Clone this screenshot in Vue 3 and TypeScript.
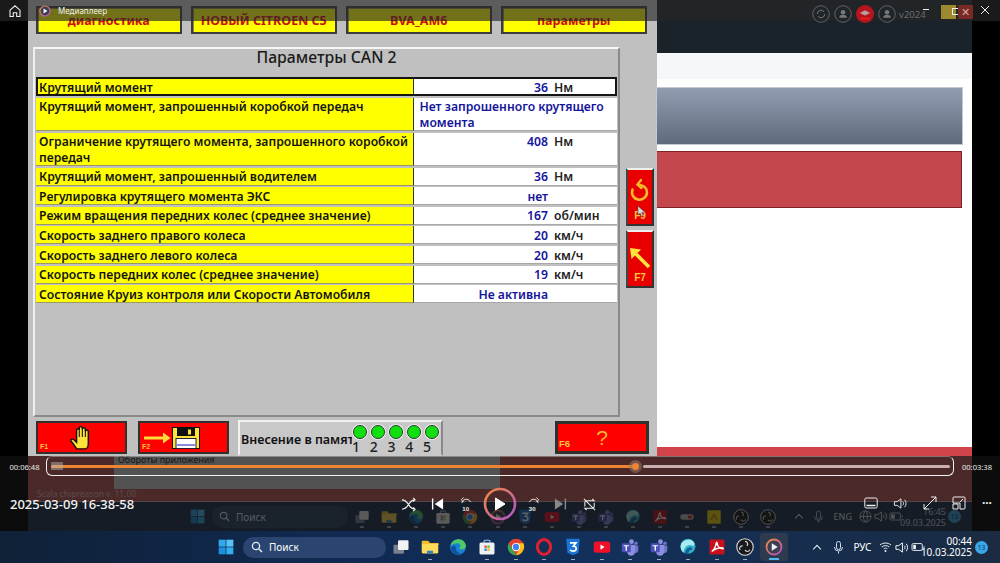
<script setup lang="ts">
interface Row { label: string; value: string; unit?: string; tall?: boolean; text?: boolean; active?: boolean }

const tabs: string[] = ['диагностика', 'НОВЫЙ CITROEN C5', 'BVA_AM6', 'параметры']

const rows: Row[] = [
  { label: 'Крутящий момент', value: '36', unit: 'Нм', active: true },
  { label: 'Крутящий момент, запрошенный коробкой передач', value: 'Нет запрошенного крутящего момента', tall: true, text: true },
  { label: 'Ограничение крутящего момента, запрошенного коробкой передач', value: '408', unit: 'Нм', tall: true },
  { label: 'Крутящий момент, запрошенный водителем', value: '36', unit: 'Нм' },
  { label: 'Регулировка крутящего момента ЭКС', value: 'нет' },
  { label: 'Режим вращения передних колес (среднее значение)', value: '167', unit: 'об/мин' },
  { label: 'Скорость заднего правого колеса', value: '20', unit: 'км/ч' },
  { label: 'Скорость заднего левого колеса', value: '20', unit: 'км/ч' },
  { label: 'Скорость передних колес (среднее значение)', value: '19', unit: 'км/ч' },
  { label: 'Состояние Круиз контроля или Скорости Автомобиля', value: 'Не активна' },
]

const leds: number[] = [1, 2, 3, 4, 5]

const statusIcons: string[] = ['s-refresh', 's-user', 's-cap', 's-user']

const innerApps: string[] = ['i-view', 'i-folder', 'i-edge', 'i-store', 'i-chrome', 'i-player', 'i-css', 'i-yt', 'i-teams', 'i-teams', 'i-globe', 'i-pdf', 'i-toggle', 'i-gold', 'i-obs', 'i-obs']
const outerApps: string[] = ['i-view', 'i-folder', 'i-edge', 'i-store', 'i-chrome', 'i-opera', 'i-css', 'i-yt', 'i-teams', 'i-teams', 'i-globe', 'i-pdf', 'i-obs', 'i-player']
</script>

<template>
  <div class="stage">
    <svg class="sprite" width="0" height="0" aria-hidden="true">
      <defs>
        <linearGradient id="ringGrad" x1="0" y1="0" x2="1" y2="1">
          <stop offset="0" stop-color="#f08a3c" />
          <stop offset="1" stop-color="#b054c8" />
        </linearGradient>
        <symbol id="i-win" viewBox="0 0 24 24">
          <path fill="#2fa8ee" d="M1 1h10.500v10.500H1z" /><path fill="#53c3f8" d="M12.500 1H23v10.500H12.500z" />
          <path fill="#1d8fdc" d="M1 12.500h10.500V23H1z" /><path fill="#33aef0" d="M12.500 12.500H23V23H12.500z" />
        </symbol>
        <symbol id="i-view" viewBox="0 0 24 24">
          <rect x="2" y="9" width="14" height="12" rx="1.500" fill="#77808c" />
          <rect x="8" y="3" width="14" height="13" rx="1.500" fill="#f2f2f2" />
        </symbol>
        <symbol id="i-folder" viewBox="0 0 24 24">
          <path fill="#f2bd2c" d="M1 5a1.500 1.500 0 0 1 1.500-1.500h7l2.500 3h10.500a1 1 0 0 1 1 1V9H1z" />
          <path fill="#ffd95a" d="M1 8h22v11a1.500 1.500 0 0 1-1.500 1.500h-19A1.500 1.500 0 0 1 1 19z" />
          <rect x="8" y="17" width="8" height="3.500" fill="#2a7fd0" />
        </symbol>
        <symbol id="i-edge" viewBox="0 0 24 24">
          <circle cx="12" cy="12" r="10.500" fill="#1b80cf" />
          <path fill="#4ec96a" d="M2 11C3 4 9 1.500 13 1.500c5.500 0 9.500 4.500 9.500 9 0 3-2.500 4.500-5.500 4.500-2 0-3-.8-3.500-1.500 3-1.500 2-6.500-2.500-6.500C7 7 3.500 8.500 2 11z" />
          <path fill="#0e4f9e" d="M9 13c0 4 3 7.500 7 8.500-6 2-12-2-13.500-8C4 10 9 9 9 13z" />
        </symbol>
        <symbol id="i-store" viewBox="0 0 24 24">
          <path fill="none" stroke="#9ecbf0" stroke-width="1.500" d="M8 6V4.500a1.500 1.500 0 0 1 1.500-1.500h5A1.500 1.500 0 0 1 16 4.500V6" />
          <rect x="2" y="6" width="20" height="16" rx="2" fill="#eef1f4" />
          <path fill="#e8543a" d="M8.500 10h3.200v3.200H8.500z" /><path fill="#6cbb3c" d="M12.500 10h3.200v3.200h-3.200z" />
          <path fill="#2a8fe0" d="M8.500 14h3.200v3.200H8.500z" /><path fill="#f6b82c" d="M12.500 14h3.200v3.200h-3.200z" />
        </symbol>
        <symbol id="i-chrome" viewBox="0 0 24 24">
          <circle cx="12" cy="12" r="11" fill="#e34133" />
          <path fill="#2fa84f" d="M2.500 7 8 16.500 12.500 23C5 23.500-2 15 2.500 7z" />
          <path fill="#fbc116" d="M12 7h10c3 7-3 16-10 16l5-9z" />
          <circle cx="12" cy="12" r="5.500" fill="#fff" /><circle cx="12" cy="12" r="4.200" fill="#3d82ef" />
        </symbol>
        <symbol id="i-opera" viewBox="0 0 24 24">
          <ellipse cx="12" cy="12" rx="8.800" ry="10" fill="none" stroke="#e0202e" stroke-width="4" />
        </symbol>
        <symbol id="i-css" viewBox="0 0 24 24">
          <path fill="#1b74d6" d="M3 1h18l-1.600 18.500L12 23l-7.400-3.500z" />
          <path fill="none" stroke="#fff" stroke-width="2.200" d="M8 6.500h8l-3.500 4.500c3 0 4 1.500 3.800 3.500-.2 2-2.300 3-4.300 3-1.500 0-3-.6-3.800-1.800" />
        </symbol>
        <symbol id="i-yt" viewBox="0 0 24 24">
          <rect x="1" y="4.500" width="22" height="15" rx="3.500" fill="#f0102a" />
          <path fill="#fff" d="m10 8.500 5.500 3.500-5.500 3.500z" />
        </symbol>
        <symbol id="i-teams" viewBox="0 0 24 24">
          <circle cx="14" cy="5" r="3.200" fill="#8a8fe0" /><circle cx="20" cy="7" r="2.300" fill="#6f74c8" />
          <path fill="#6f74c8" d="M16 10h7v6.500a3.500 3.500 0 0 1-6 2.500z" />
          <path fill="#8a8fe0" d="M8 9h11v9a5.500 5.500 0 0 1-11 0z" />
          <rect x="1" y="7" width="12" height="12" rx="1.500" fill="#4b50b8" />
          <path fill="#fff" d="M3.500 9.500h7v1.600H7.900V17H6.100v-5.900H3.500z" />
        </symbol>
        <symbol id="i-globe" viewBox="0 0 24 24">
          <circle cx="12" cy="11" r="10" fill="#2fb2c8" />
          <path fill="#a4ecf0" d="M3 7c4-5 11-6 15-3 3 2 3 5 1 7-4-3-8-2-11 2-1.500 2-2 5-2 7-3-3-5-8-3-13z" />
          <path fill="#145f9a" d="M8 20c1-6 5-9 9-7l1 3c-3-1-5 1-6 6z" />
        </symbol>
        <symbol id="i-pdf" viewBox="0 0 24 24">
          <rect x="2" y="2" width="20" height="20" rx="2" fill="#c8101c" />
          <path fill="none" stroke="#fff" stroke-width="1.800" d="M5 18c3-2 5-6 6-11 .3-2 1.500-1.500 1.500.5 0 4 4 7 7 7 1.500 0 1-1.500-1-1.500-4 0-9 1-13.500 5z" />
        </symbol>
        <symbol id="i-obs" viewBox="0 0 24 24">
          <circle cx="12" cy="12" r="11" fill="#1a1a1e" stroke="#d8d8d8" stroke-width="1.500" />
          <path fill="none" stroke="#d8d8d8" stroke-width="1.600" d="M12 4.500a3.500 3.500 0 0 1 2.500 6M5.500 16a3.500 3.500 0 0 1 3.500-5.500M18.500 15.500A3.500 3.500 0 0 1 12 16" />
        </symbol>
        <symbol id="i-player" viewBox="0 0 24 24">
          <circle cx="12" cy="12" r="10" fill="#3a3f52" stroke="url(#ringGrad)" stroke-width="2.400" />
          <path fill="#f4f4f4" d="m9 7 8 5-8 5z" />
        </symbol>
        <symbol id="i-toggle" viewBox="0 0 24 24">
          <rect x="2" y="8" width="20" height="8" rx="4" fill="#c8c8c8" /><rect x="13" y="9.500" width="7" height="5" rx="2.500" fill="#e03030" />
        </symbol>
        <symbol id="i-gold" viewBox="0 0 24 24">
          <rect x="2" y="2" width="20" height="20" fill="#f4e010" /><path fill="#c88a10" d="m12 6 6 10h-3l-3-5-3 5H6z" />
        </symbol>
        <symbol id="s-refresh" viewBox="0 0 24 24">
          <circle cx="12" cy="12" r="11" fill="none" stroke="#7d8388" /><path fill="none" stroke="#7d8388" stroke-width="1.300" d="M7 12a5 5 0 0 1 9-3m1 3a5 5 0 0 1-9 3" />
        </symbol>
        <symbol id="s-user" viewBox="0 0 24 24">
          <circle cx="12" cy="12" r="11" fill="none" stroke="#7d8388" /><circle cx="12" cy="9.500" r="3" fill="#7d8388" /><path fill="#7d8388" d="M7 17c0-3 2-4 5-4s5 1 5 4z" />
        </symbol>
        <symbol id="s-cap" viewBox="0 0 24 24">
          <circle cx="12" cy="12" r="12" fill="#c8141c" /><path fill="#c9a9a9" d="m12 7 7 3.500-7 3.500-7-3.500z" /><rect x="6" y="17" width="12" height="2" fill="#ff2020" />
        </symbol>
      </defs>
    </svg>

    <div class="video">
      <div class="upper">
        <section class="scada">
          <div class="tabs">
            <div v-for="tab in tabs" :key="tab" class="tab">{{ tab }}</div>
          </div>

          <div class="middle">
            <div class="panel">
              <h1 class="panel-title">Параметры CAN 2</h1>
              <div class="table">
                <div
                  v-for="row in rows"
                  :key="row.label"
                  class="row"
                  :class="{ tall: row.tall, active: row.active }"
                >
                  <div class="label">{{ row.label }}</div>
                  <div v-if="row.text" class="value text">{{ row.value }}</div>
                  <div v-else class="value">
                    <span class="num">{{ row.value }}</span>
                    <span v-if="row.unit" class="unit">{{ row.unit }}</span>
                  </div>
                </div>
              </div>
            </div>

            <div class="side">
              <button class="side-btn">
                <svg width="24" height="30" viewBox="0 0 24 30">
                  <path fill="none" stroke="#f6b92e" stroke-width="2.600" stroke-linecap="round" d="M12 8c4 .5 7 3.500 7 7.500a7.500 7.500 0 1 1-14.500-3" />
                  <path fill="none" stroke="#f6b92e" stroke-width="2.400" stroke-linecap="round" d="M13 3 9.500 7.500l4 3.500" />
                </svg>
                <span class="fkey">F9</span>
                <svg class="cursor" width="9" height="13" viewBox="0 0 9 13">
                  <path fill="#dcdcdc" stroke="#555" stroke-width=".6" d="M1 1v9l2.200-2 1.500 3.500 1.500-.7L4.800 7.400H8z" />
                </svg>
              </button>
              <button class="side-btn">
                <svg width="24" height="30" viewBox="0 0 24 30">
                  <path fill="none" stroke="#ffe23a" stroke-width="3.600" d="M21 28 6 13" />
                  <path fill="#ffe23a" d="m2 9 11 1.500L3.500 20z" />
                </svg>
                <span class="fkey">F7</span>
              </button>
            </div>
          </div>

          <div class="bottom-btns">
            <button class="red-btn">
              <span class="fkey corner">F1</span>
              <svg width="26" height="26" viewBox="0 0 24 24">
                <path fill="#ffe23a" stroke="#111" stroke-width="1.300" d="M7 22c-2-3-3-5-5-7-1-1.500 1-3 3-1l2 2V5c0-2 2.500-2 2.500 0V3c0-2 2.800-2 2.800 0v1c0-2 2.800-2 2.800 0v2c0-1.800 2.700-1.800 2.700 0v11c0 3-1.500 5-3 5z" />
                <path fill="none" stroke="#111" stroke-width="1" d="M9.500 5v6m2.800-8v8m2.800-7v7" />
              </svg>
            </button>
            <button class="red-btn save">
              <span class="fkey corner">F2</span>
              <svg width="56" height="22" viewBox="0 0 56 22">
                <path fill="#ffd83a" d="M0 9.500h19V5.500l7.500 5.500-7.500 5.500V12.500H0z" />
                <rect x="28.500" y=".5" width="27" height="21" fill="#ffe23a" stroke="#111" />
                <rect x="33" y="1" width="18" height="8" fill="#111" /><rect x="44" y="2.500" width="3" height="5" fill="#ffe23a" />
                <rect x="32" y="11.500" width="20" height="10" fill="#fff" stroke="#223" /><rect x="33" y="17" width="18" height="2" fill="#8a8ad8" />
              </svg>
            </button>
            <div class="memory">
              <span class="memory-text">Внесение в память</span>
              <div class="leds">
                <div v-for="n in leds" :key="n" class="led-col">
                  <span class="led"></span>
                  <span class="led-num">{{ n }}</span>
                </div>
              </div>
            </div>
            <button class="red-btn help">
              <span class="fkey corner">F6</span>
              <span class="q">?</span>
            </button>
          </div>
        </section>

        <section class="web">
          <div class="web-head"></div>
          <div class="web-sub"></div>
          <div class="web-body">
            <div class="grey-bar"></div>
            <div class="red-bar"></div>
          </div>
          <div class="red-band"></div>
        </section>
      </div>

      <div class="strip">
        <div class="strip-block">
          <span class="strip-clip">Обороты приложения</span>
        </div>
        <span class="strip-ver">Scala chipreason v. 11.00</span>
      </div>

      <div class="taskbar inner">
        <svg class="win" width="15" height="15"><use href="#i-win" /></svg>
        <div class="search">
          <svg width="11" height="11" viewBox="0 0 12 12"><circle cx="5" cy="5" r="3.600" fill="none" stroke="#dfe6ee" stroke-width="1.300" /><path stroke="#dfe6ee" stroke-width="1.500" d="m8 8 3 3" /></svg>
          <span>Поиск</span>
        </div>
        <div class="apps">
          <span v-for="(a, i) in innerApps" :key="i" class="app">
            <svg width="16" height="16"><use :href="'#' + a" /></svg>
          </span>
        </div>
        <div class="tray">
          <span class="chev"></span>
          <svg width="11" height="14" viewBox="0 0 11 14"><rect x="3.500" y="1" width="4" height="8" rx="2" fill="none" stroke="#b4c2d4" /><path fill="none" stroke="#b4c2d4" d="M1.500 6.500a4 4 0 0 0 8 0M5.500 11v2" /></svg>
          <span class="lang">ENG</span>
          <svg width="13" height="13" viewBox="0 0 14 14"><circle cx="7" cy="7" r="6" fill="none" stroke="#ddd" /><path fill="none" stroke="#ddd" d="M1 7h12M7 1c-3 3-3 9 0 12M7 1c3 3 3 9 0 12" /></svg>
          <svg width="13" height="13" viewBox="0 0 14 14"><path fill="none" stroke="#ddd" d="M1 5h3l4-3v10L4 9H1zM10 5c1 1 1 3 0 4M12 3c2 2 2 6 0 8" /></svg>
          <svg width="14" height="13" viewBox="0 0 16 14"><rect x="1" y="3" width="12" height="8" rx="1.500" fill="none" stroke="#ddd" /><rect x="2.500" y="4.500" width="4" height="5" fill="#ddd" /><path stroke="#ddd" d="M15 6v2" /></svg>
          <div class="clock"><span>16:45</span><span>09.03.2025</span></div>
          <span class="badge">13</span>
        </div>
      </div>
    </div>

    <!-- media player overlays -->
    <header class="titlebar">
      <svg class="home" width="14" height="14" viewBox="0 0 14 14"><path fill="none" stroke="#eee" stroke-width="1.100" d="M2 6.200 7 1.800l5 4.400V12.500H8.700V8.800H5.300v3.700H2z" /></svg>
      <svg class="logo" width="12" height="12"><use href="#i-player" /></svg>
      <span class="app-name">Медиаплеер</span>
      <div class="status-icons">
        <svg v-for="(s, i) in statusIcons" :key="i" width="18" height="18"><use :href="'#' + s" /></svg>
        <span class="version">v2024</span>
      </div>
      <div class="window-controls">
        <span class="min"></span>
        <span class="gold"></span>
        <span class="max"></span>
        <span class="redx">✕</span>
        <svg class="close" width="10" height="10" viewBox="0 0 10 10"><path stroke="#eee" stroke-width="1" d="m1 1 8 8M9 1 1 9" /></svg>
      </div>
    </header>

    <div class="player">
      <div class="timeline-row">
        <span class="time">00:06:48</span>
        <div class="track">
          <span class="back-mark"></span>
          <span class="elapsed"></span>
          <span class="knob"></span>
          <span class="remaining"></span>
        </div>
        <span class="time">00:03:38</span>
      </div>
      <div class="controls">
        <span class="media-title">2025-03-09 16-38-58</span>
        <div class="transport">
          <svg width="15" height="15" viewBox="0 0 16 16"><path fill="none" stroke="#eee" stroke-width="1.200" d="M1 3c4 0 5 2 7 5s3 5 7 5M1 13c4 0 5-2 7-5s3-5 7-5M13 1l2 2-2 2M13 11l2 2-2 2" /></svg>
          <svg width="13" height="14" viewBox="0 0 14 14"><path fill="#fff" d="M1 1h1.500v12H1zM13 1v12L4 7z" /></svg>
          <svg width="15" height="16" viewBox="0 0 16 16"><path fill="none" stroke="#eee" d="M3 7a5 5 0 0 1 8-3l1.500 2M5 1 2.500 3.500 5 6" /><text x="3.500" y="15" class="skip">10</text></svg>
          <svg width="34" height="34" viewBox="0 0 34 34">
            <circle cx="17" cy="17" r="15" fill="none" stroke="url(#ringGrad)" stroke-width="2.600" />
            <path fill="#fff" stroke="#fff" stroke-linejoin="round" d="M12.500 11v12l9.500-6z" />
          </svg>
          <svg width="15" height="16" viewBox="0 0 16 16"><path fill="none" stroke="#eee" d="M13 7a5 5 0 0 0-8-3L3.500 6M11 1l2.500 2.500L11 6" /><text x="3" y="15" class="skip">30</text></svg>
          <svg width="13" height="14" viewBox="0 0 14 14"><path fill="#888" d="M11.500 1H13v12h-1.500zM1 1v12l9-6z" /></svg>
          <svg width="15" height="15" viewBox="0 0 16 16"><path fill="none" stroke="#eee" stroke-width="1.100" d="M3 10V6a2 2 0 0 1 2-2h8l-2-2M13 6v4a2 2 0 0 1-2 2H3l2 2M2 2l12 12" /></svg>
        </div>
        <div class="extras">
          <svg width="14" height="13" viewBox="0 0 14 13"><rect x=".8" y="1" width="12.400" height="10" rx="1.500" fill="none" stroke="#eee" /><path stroke="#eee" stroke-width="1.500" d="M2.500 8.500h9" /></svg>
          <svg width="14" height="13" viewBox="0 0 14 14"><path fill="none" stroke="#eee" d="M1 5h3l4-3v10L4 9H1zM10 5c1 1 1 3 0 4M12 3c2 2 2 6 0 8" /></svg>
          <svg width="14" height="14" viewBox="0 0 14 14"><path fill="none" stroke="#eee" d="M1 13 13 1M8 1h5v5M6 13H1V8" /></svg>
          <svg width="14" height="14" viewBox="0 0 14 14"><path fill="none" stroke="#eee" d="M1 6V2a1 1 0 0 1 1-1h10a1 1 0 0 1 1 1v10a1 1 0 0 1-1 1H8V7H1zM1 8h5v5H1zM11 3 8 6" /></svg>
          <span class="dots">···</span>
        </div>
      </div>
    </div>

    <footer class="taskbar outer">
      <svg class="win" width="16" height="16"><use href="#i-win" /></svg>
      <div class="search">
        <svg width="12" height="12" viewBox="0 0 12 12"><circle cx="5" cy="5" r="3.600" fill="none" stroke="#e8eef5" stroke-width="1.300" /><path stroke="#e8eef5" stroke-width="1.500" d="m8 8 3 3" /></svg>
        <span>Поиск</span>
      </div>
      <div class="apps">
        <span
          v-for="(a, i) in outerApps"
          :key="i"
          class="app"
          :class="{ current: a === 'i-player', running: a !== 'i-view' && a !== 'i-edge' }"
        >
          <svg width="18" height="18"><use :href="'#' + a" /></svg>
        </span>
      </div>
      <div class="tray">
        <span class="chev"></span>
        <svg width="11" height="15" viewBox="0 0 11 14"><rect x="3.500" y="1" width="4" height="8" rx="2" fill="none" stroke="#cfe0f2" /><path fill="none" stroke="#cfe0f2" d="M1.500 6.500a4 4 0 0 0 8 0M5.500 11v2" /></svg>
        <span class="lang">РУС</span>
        <svg width="13" height="12" viewBox="0 0 14 12"><path fill="none" stroke="#fff" d="M1 4c3-3 9-3 12 0M3 6c2-2 6-2 8 0M5 8c1-1 3-1 4 0" /><circle cx="7" cy="10.300" r="1" fill="#fff" /></svg>
        <svg width="13" height="13" viewBox="0 0 14 14"><path fill="none" stroke="#fff" d="M1 5h3l4-3v10L4 9H1zM10 5c1 1 1 3 0 4M12 3c2 2 2 6 0 8" /></svg>
        <svg width="14" height="12" viewBox="0 0 16 14"><rect x="1" y="3" width="12" height="8" rx="1.500" fill="none" stroke="#fff" /><rect x="2.500" y="4.500" width="3" height="5" fill="#fff" /><path stroke="#fff" d="M15 6v2" /></svg>
        <div class="clock"><span>00:44</span><span>10.03.2025</span></div>
        <span class="badge">13</span>
      </div>
    </footer>
  </div>
</template>

<style scoped>
.stage {
  position: relative;
  width: 1000px;
  height: 563px;
  overflow: hidden;
  background: #000;
  font-family: "Noto Sans", "Open Sans", sans-serif;
  display: flex;
  flex-direction: column;
}
.sprite { position: absolute; }
.video {
  height: 531px;
  margin: 0 28px;
  display: flex;
  flex-direction: column;
}
.upper { display: flex; height: 456px; }

/* diagnostic application */
.scada {
  width: 629px;
  background: #c0c0c0;
  display: flex;
  flex-direction: column;
  padding: 6px 8px 0 5px;
  box-sizing: border-box;
}
.tabs { display: flex; gap: 9.500px; padding-left: 3px; height: 28px; }
.tab {
  width: 145.500px;
  box-sizing: border-box;
  background: #ffff00;
  border: 2px solid #3c3c3c;
  box-shadow: inset 1px 1px 0 #8a8a50;
  color: #cc1010;
  font-weight: 700;
  font-size: 12.500px;
  text-align: center;
  line-height: 26px;
}
.middle { display: flex; margin-top: 13px; height: 372px; }
.panel {
  width: 587px;
  box-sizing: border-box;
  border: 2px solid;
  border-color: #f6f6f6 #8a8a8a #8a8a8a #f0f0f0;
  padding: 0 1px;
}
.panel-title {
  margin: 0;
  height: 28px;
  line-height: 17px;
  text-align: center;
  font-size: 15.800px;
  font-weight: 500;
  color: #1a1a1a;
}
.table { display: flex; flex-direction: column; gap: 1.620px; }
.row {
  display: grid;
  grid-template-columns: 378px 203px;
  width: 581px;
  height: 18px;
  font-size: 12.200px;
  font-weight: 600;
  line-height: 15.500px;
}
.row.tall { height: 33.400px; }
.row.active {
  height: 19px;
  box-sizing: border-box;
  outline: 2px solid #151515;
  outline-offset: -2px;
}
.label {
  background: #ffff00;
  color: #141414;
  padding: 1.500px 2px 0 3px;
  border-right: 1px solid #35352a;
  border-bottom: 1px solid #9a9a60;
  box-sizing: border-box;
}
.value {
  background: #fff;
  color: #14149c;
  display: flex;
  padding-top: 1.500px;
  border-bottom: 1px solid #a8a8a8;
  box-sizing: border-box;
}
.active .label { padding: 2.500px 0 0 3px; }
.active .value { padding-top: 2.500px; }
.value.text { display: block; padding: 1.500px 4px 0 5.500px; }
.num { width: 134px; text-align: right; flex: none; }
.unit { margin-left: 6px; color: #222; }

.side {
  display: flex;
  flex-direction: column;
  gap: 4px;
  margin: 121px 0 0 6px;
}
.side-btn {
  position: relative;
  width: 28px;
  height: 58px;
  padding: 7px 0 3px;
  box-sizing: border-box;
  background: #e80000;
  border: 2px solid;
  border-color: #eee #333 #333 #444;
  display: flex;
  flex-direction: column;
  align-items: center;
  justify-content: space-between;
}
.fkey {
  color: #ffc83c;
  font: 700 10px/10px "Liberation Sans", sans-serif;
}
.cursor { position: absolute; left: 9px; top: 35px; }

.bottom-btns { display: flex; align-items: flex-start; margin-top: 3px; height: 36px; padding-left: 3px; }
.red-btn {
  position: relative;
  width: 91px;
  height: 33px;
  margin-top: 1px;
  box-sizing: border-box;
  background: #ff0000;
  border: 2px solid #30302c;
  padding: 0;
  display: flex;
  align-items: center;
  justify-content: center;
}
.save { margin-left: 11px; padding-right: 24px; }
.help { margin-left: 112px; width: 94px; border-width: 3px; }
.corner { position: absolute; left: 2px; bottom: 0; font-size: 7px; }
.help .corner { font-size: 9.500px; left: 1px; bottom: 2px; }
.q { color: #f6b92e; font: 400 21px/1 "Liberation Sans", sans-serif; }
.memory {
  margin-left: 9px;
  width: 205px;
  height: 36px;
  box-sizing: border-box;
  background: #c8c8c8;
  border: 2px solid;
  border-color: #f2f2f2 #8a8a8a #c8c8c8 #f2f2f2;
  display: flex;
  padding-left: 1px;
}
.memory-text {
  width: 112px;
  overflow: hidden;
  white-space: nowrap;
  font-size: 12.500px;
  font-weight: 600;
  line-height: 36px;
  color: #111;
}
.leds { display: flex; }
.led-col { width: 17.800px; display: flex; flex-direction: column; align-items: center; }
.led {
  width: 14px;
  height: 14px;
  border-radius: 50%;
  background: #10e010;
  border: 1px solid #2a3a2a;
  box-shadow: 0 0 0 1px #e8e8e8;
  box-sizing: border-box;
  margin-top: 2.500px;
  margin-left: -1px;
}
.led-num { font: 500 14px/15px "Noto Sans", sans-serif; color: #222; margin: .5px 10px 0 0; }

/* browser page behind */
.web { flex: 1; background: #fff; display: flex; flex-direction: column; }
.web-head { height: 53px; background: #1a222a; }
.web-sub { height: 26px; background: #f6f7f8; }
.web-body { flex: 1; padding: 9px 10px 0 0; display: flex; flex-direction: column; gap: 7px; }
.grey-bar { height: 56px; background: linear-gradient(#929db2, #5f6a7c); box-shadow: 0 0 0 1px #c4cad2; }
.red-bar { height: 55px; background: #c4474d; border: 1px solid #7c2226; border-left: 0; }
.red-band { height: 9px; background: #cf4349; }

.strip {
  position: relative;
  height: 46px;
  background: #c85a5c;
  border-bottom: 1px solid #d8b0b0;
  box-sizing: border-box;
}
.strip-block {
  position: absolute;
  left: 86px;
  top: 0;
  width: 386px;
  height: 33px;
  background: #d8d8d8;
  overflow: hidden;
}
.strip-clip { position: absolute; left: 4px; top: -3px; font-size: 9px; color: #222; }
.strip-ver { position: absolute; left: 9px; top: 32px; font-size: 8.500px; color: #fff; opacity: .6; }

/* task bars */
.taskbar { display: flex; align-items: center; box-sizing: border-box; }
.inner { height: 29px; background: #1f3450; color: #e8eef5; padding: 0 12px 0 162px; }
.outer {
  height: 32px;
  background: linear-gradient(90deg, #0f2137 0%, #102a52 35%, #12305a 60%, #1a2b42 100%);
  color: #fff;
  padding: 0 13px 0 218px;
}
.win { flex: none; }
.search {
  display: flex;
  align-items: center;
  gap: 6px;
  border-radius: 12px;
  font-size: 10px;
  flex: none;
  box-sizing: border-box;
}
.inner .search { width: 136px; height: 22px; margin-left: 7px; padding-left: 7px; background: #2c4464; }
.outer .search { width: 143px; height: 21px; margin-left: 9px; padding-left: 8px; background: #2a4670; }
.apps { display: flex; align-items: center; flex: none; }
.inner .apps { margin-left: .5px; }
.outer .apps { margin-left: .6px; }
.app { position: relative; display: flex; align-items: center; justify-content: center; flex: none; }
.inner .app { width: 27.100px; height: 24px; }
.outer .app { width: 28.700px; height: 28px; }
.outer .running::after, .inner .app::after {
  content: "";
  position: absolute;
  bottom: 1px;
  left: 50%;
  width: 4px;
  height: 1.500px;
  margin-left: -2px;
  background: #9aa8ba;
}
.outer .app.current { background: #2e3a4e; border-radius: 3px; }
.outer .app.current::after { width: 10px; margin-left: -5px; height: 2px; background: #52b8f0; }
.tray { display: flex; align-items: center; margin-left: auto; flex: none; }
.inner .tray { gap: 2px; font-size: 9px; }
.outer .tray { gap: 3px; font-size: 10px; }
.chev { width: 6px; height: 6px; border: solid #e8eef5; border-width: 1.500px 0 0 1.500px; box-sizing: border-box; transform: rotate(45deg); margin: 3px 9.500px 0 0; }
.inner .lang { margin: 0 5px 0 7.500px; }
.outer .lang { margin: 0 4.500px 0 6.500px; }
.clock { display: flex; flex-direction: column; align-items: flex-end; line-height: 11px; flex: none; }
.inner .clock { width: 38px; margin-left: 3px; opacity: .85; }
.outer .clock { width: 40px; margin-left: 4px; }
.badge {
  width: 13px;
  height: 13px;
  margin-right: -1px;
  border-radius: 50%;
  background: #3aa8e8;
  color: #12304e;
  font-size: 6.500px;
  line-height: 13px;
  text-align: center;
  flex: none;
}

/* media player chrome */
.titlebar {
  position: absolute;
  left: 0; top: 0; right: 0;
  height: 21px;
  background: rgba(40, 40, 40, .66);
  display: flex;
  align-items: center;
  color: #eee;
}
.home { margin-left: 8px; }
.logo { margin-left: 17px; }
.app-name { margin-left: 7px; font-size: 8px; }
.status-icons { display: flex; align-items: center; gap: 4px; margin-left: 705px; margin-top: 7px; opacity: .9; }
.version { color: #70767c; font-size: 9.500px; margin-left: -1px; }
.window-controls { position: absolute; left: 920px; top: 0; width: 80px; height: 21px; }
.min { position: absolute; left: 3px; top: 9px; width: 6px; height: 1px; background: #eee; }
.gold { position: absolute; left: 21px; top: 5px; width: 15px; height: 14px; background: #9e8a2e; }
.max { position: absolute; left: 32px; top: 8px; width: 5px; height: 5px; border: 1px solid #eee; }
.redx { position: absolute; left: 38px; top: 5px; width: 15px; height: 14px; background: #7a2a26; color: #d8a8a0; font-size: 11px; line-height: 14px; text-align: center; }
.close { position: absolute; left: 60px; top: 5px; }

.player {
  position: absolute;
  left: 0; right: 0; top: 456px;
  height: 75px;
  background: rgba(17, 17, 17, .68);
  color: #eee;
  display: flex;
  flex-direction: column;
}
.timeline-row { display: flex; align-items: center; height: 21px; }
.time { width: 46px; text-align: center; font-size: 7.600px; flex: none; color: #e8e8e8; }
.timeline-row .time:first-child { padding-left: 3px; box-sizing: border-box; }
.track {
  position: relative;
  width: 908px;
  height: 20px;
  margin-top: -1px;
  box-sizing: border-box;
  border: 1px solid #f2f2f2;
  border-top-color: rgba(240, 240, 240, .35);
  border-radius: 6px;
  display: flex;
  align-items: center;
  padding-left: 4px;
}
.back-mark { position: absolute; left: 4px; top: 5px; width: 12px; height: 8px; background: rgba(190, 190, 190, .45); }
.elapsed { width: 584px; height: 3px; background: #ec8434; border-radius: 2px; }
.knob {
  width: 7px; height: 7px; margin: 0 0 0 -3px; border-radius: 50%;
  background: #ec8434; box-shadow: 0 0 0 3px rgba(150, 120, 100, .55); flex: none;
}
.remaining { flex: 1; height: 3px; background: #c8b0b0; margin: 0 3px 0 4px; border-radius: 2px; }
.controls { flex: 1; position: relative; height: 54px; }
.media-title { position: absolute; left: 10px; top: 17px; font: 500 13px/20px "Noto Sans", sans-serif; color: #f4f4f4; }
.transport {
  position: absolute;
  left: 393.500px;
  top: 10px;
  height: 34px;
  display: grid;
  grid-template-columns: 29px 29px 29px 39px 27px 28px 29px;
  align-items: center;
  justify-items: center;
}
.skip { fill: #eee; font: 700 6.500px "Liberation Sans", sans-serif; }
.extras { position: absolute; left: 864px; top: 19px; width: 128px; display: flex; align-items: center; justify-content: space-between; }
.dots { font-size: 12px; font-weight: 700; line-height: 12px; }
</style>
